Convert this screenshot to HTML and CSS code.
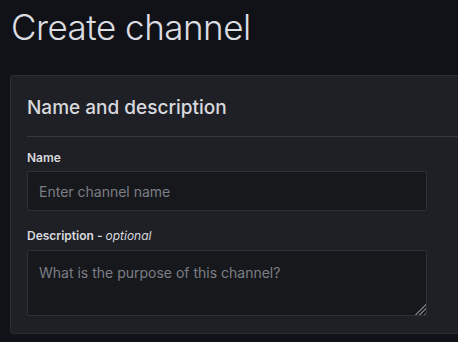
FILE: index.html
```html
<!DOCTYPE html>
<html lang="en">
<head>
  <meta charset="UTF-8" />
  <meta name="viewport" content="width=device-width, initial-scale=1.0"/>
  <title>Create channel</title>
  <link rel="stylesheet" href="styles.css">
</head>
<body>
  <div class="page">
    <h1>Create channel</h1>

    <div class="card">
      <h2>Name and description</h2>
      <form class="form">
        <label for="name">Name</label>
        <input type="text" id="name" placeholder="Enter channel name">

        <label for="description" class="label-gap">Description - <em>optional</em></label>
        <div class="textarea-wrap">
          <textarea id="description" placeholder="What is the purpose of this channel?"></textarea>
        </div>
      </form>
    </div>
  </div>
</body>
</html>
```

FILE: styles.css
```css
:root {
  --canvas: #111217;
  --card-bg: #1f2025;
  --card-border: #2c2e33;
  --input-bg: #17181c;
  --input-border: #2f3136;
  --text: #d8d9de;
  --placeholder: #7c7e86;
}

body {
  margin: 0;
  background-color: var(--canvas);
  color: var(--text);
  font-family: Inter, "Noto Sans", sans-serif;
  overflow: hidden;
}

.page {
  padding: 0 0 0 10px;
}

h1 {
  margin: 0;
  padding: 5px 0 0 1px;
  font-size: 35px;
  font-weight: 300;
  line-height: 44px;
  letter-spacing: -0.5px;
  color: #dcdde2;
}

.card {
  margin-top: 26px;
  width: 600px;
  background-color: var(--card-bg);
  border: 1px solid var(--card-border);
  border-radius: 3px;
  padding: 0 16px 17px 16px;
}

h2 {
  margin: 0;
  padding: 20px 0 16px;
  font-size: 19px;
  font-weight: 500;
  line-height: 24px;
  border-bottom: 1px solid #36383e;
}

.form {
  display: flex;
  flex-direction: column;
  width: 400px;
}

label {
  font-size: 12px;
  font-weight: 600;
  line-height: 16px;
  margin: 13px 0 5px;
}

label.label-gap {
  margin: 17px 0 6px;
}

label em {
  font-weight: 400;
}

input,
textarea {
  box-sizing: border-box;
  width: 400px;
  background-color: var(--input-bg);
  border: 1px solid var(--input-border);
  border-radius: 2px;
  color: var(--text);
  font-family: inherit;
  font-size: 14px;
  padding: 0 11px;
}

input {
  height: 40px;
}

.textarea-wrap {
  position: relative;
  height: 66px;
}

textarea {
  display: block;
  height: 66px;
  padding-top: 12px;
  line-height: 20px;
  resize: none;
}

/* resize grip, drawn like the striped corner in the reference */
.textarea-wrap::after {
  content: '';
  position: absolute;
  right: 1px;
  bottom: 1px;
  width: 12px;
  height: 12px;
  background: repeating-linear-gradient(135deg, #6e7077 0 1px, transparent 1px 3px);
  clip-path: polygon(100% 0, 100% 100%, 0 100%);
}

input::placeholder,
textarea::placeholder {
  color: var(--placeholder);
}
```
